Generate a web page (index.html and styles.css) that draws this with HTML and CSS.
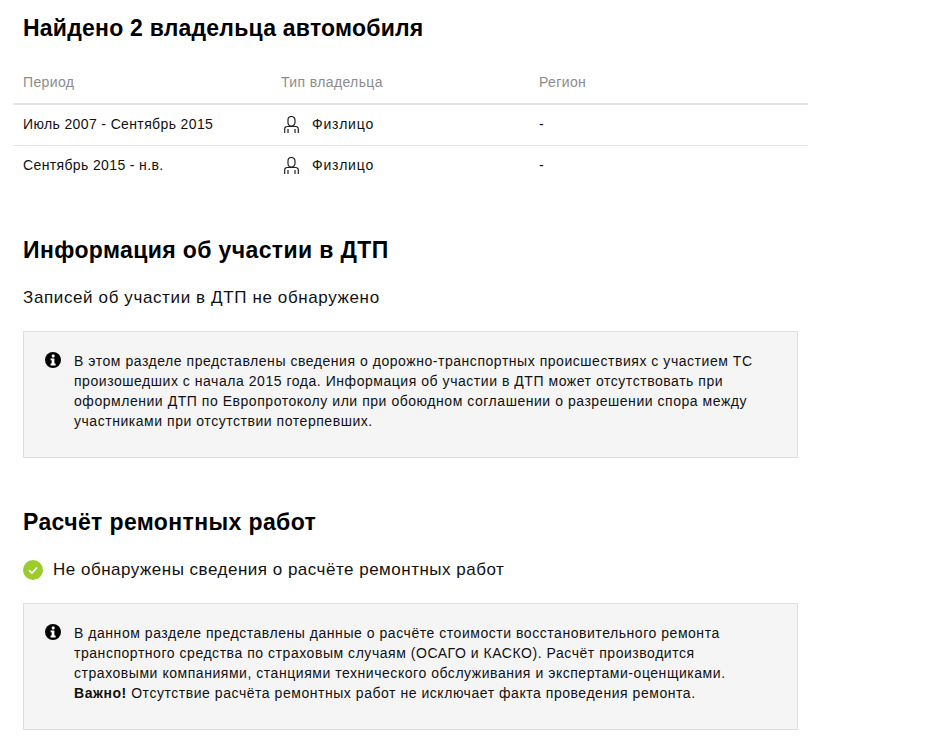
FILE: index.html
```html
<!DOCTYPE html>
<html lang="ru">
<head>
<meta charset="utf-8">
<title>Отчёт</title>
<link rel="stylesheet" href="styles.css">
</head>
<body>
<main class="page">
  <section class="owners">
    <h2 class="title title-tight">Найдено 2 владельца автомобиля</h2>
    <div class="table">
      <div class="row head"><span>Период</span><span>Тип владельца</span><span>Регион</span></div>
      <div class="row">
        <span>Июль 2007 - Сентябрь 2015</span>
        <span class="type"><svg class="person" viewBox="0 0 15 17" width="15" height="17"><path d="M4 4a3.500 3.500 0 0 1 7 0v2.500a3.500 3.500 0 0 1-7 0zM.7 17v-4a2.500 2.500 0 0 1 2.500-2.500h8.600a2.500 2.500 0 0 1 2.500 2.500v4M4 13v4M11 13v4" fill="none" stroke="#222" stroke-width="1.200"/></svg>Физлицо</span>
        <span>-</span>
      </div>
      <div class="row">
        <span>Сентябрь 2015 - н.в.</span>
        <span class="type"><svg class="person" viewBox="0 0 15 17" width="15" height="17"><path d="M4 4a3.500 3.500 0 0 1 7 0v2.500a3.500 3.500 0 0 1-7 0zM.7 17v-4a2.500 2.500 0 0 1 2.500-2.500h8.600a2.500 2.500 0 0 1 2.500 2.500v4M4 13v4M11 13v4" fill="none" stroke="#222" stroke-width="1.200"/></svg>Физлицо</span>
        <span>-</span>
      </div>
    </div>
  </section>
  <section class="dtp">
    <h2 class="title">Информация об участии в ДТП</h2>
    <p class="status">Записей об участии в ДТП не обнаружено</p>
    <div class="note">
      <svg class="info" viewBox="0 0 16 16" width="16" height="16"><circle cx="8" cy="8" r="8" fill="#000"/><rect x="6.800" y="2.600" width="2.800" height="2.800" rx="1" fill="#fff"/><path d="M5.600 6.500h3.800v5.100h1.200v1.800H5.600v-1.800h1.100V8.300H5.600z" fill="#fff"/></svg>
      <p>В этом разделе представлены сведения о дорожно-транспортных происшествиях с участием ТС произошедших с начала 2015 года. Информация об участии в ДТП может отсутствовать при оформлении ДТП по Европротоколу или при обоюдном соглашении о разрешении спора между участниками при отсутствии потерпевших.</p>
    </div>
  </section>
  <section class="repair">
    <h2 class="title">Расчёт ремонтных работ</h2>
    <p class="status ok"><svg class="check" viewBox="0 0 20 20" width="20" height="20"><circle cx="10" cy="10" r="10" fill="#9ccc2c"/><path d="M6 10.300l3 2.700 5-5.500" fill="none" stroke="#fff" stroke-width="1.800"/></svg>Не обнаружены сведения о расчёте ремонтных работ</p>
    <div class="note">
      <svg class="info" viewBox="0 0 16 16" width="16" height="16"><circle cx="8" cy="8" r="8" fill="#000"/><rect x="6.800" y="2.600" width="2.800" height="2.800" rx="1" fill="#fff"/><path d="M5.600 6.500h3.800v5.100h1.200v1.800H5.600v-1.800h1.100V8.300H5.600z" fill="#fff"/></svg>
      <p>В данном разделе представлены данные о расчёте стоимости восстановительного ремонта транспортного средства по страховым случаям (ОСАГО и КАСКО). Расчёт производится страховыми компаниями, станциями технического обслуживания и экспертами-оценщиками. <b>Важно!</b> Отсутствие расчёта ремонтных работ не исключает факта проведения ремонта.</p>
    </div>
  </section>
</main>
</body>
</html>
```
FILE: styles.css
```css
* { box-sizing: border-box; }
html, body { margin: 0; padding: 0; background: #fff; }
body { font-family: "Liberation Sans", Arial, sans-serif; color: #111; overflow: hidden; height: 746px; }
.page { width: 935px; padding: 0 0 0 23px; }
.title { margin: 0; font-size: 23px; line-height: 28px; font-weight: 700; color: #000; letter-spacing: 0.38px; }
.title-tight { letter-spacing: 0.22px; }
.owners { padding-top: 14px; }
.table { margin: 18px 0 0 -10px; width: 795px; }
.row { display: grid; grid-template-columns: 258px 258px 1fr; padding: 0 0 2px 10px; height: 41px; align-items: center; font-size: 14px; letter-spacing: 0.37px; border-bottom: 1px solid #e6e6e6; }
.row:last-child { border-bottom: 0; padding-bottom: 3px; }
.head { height: 45px; color: #8c8c8c; border-bottom: 2px solid #e2e2e2; padding-top: 1px; padding-bottom: 0; }
.type { display: flex; align-items: center; letter-spacing: 0.8px; }
.person { margin: 1px 13px 0 3px; flex: none; }
.dtp { padding-top: 49px; }
.status { margin: 22px 0 0; font-size: 17px; line-height: 24px; letter-spacing: 0.62px; color: #111; }
.note { display: flex; width: 775px; margin-top: 21px; height: 127px; padding: 19px 30px 0 21px; background: #f5f5f5; border: 1px solid #dedede; }
.note p { margin: 0; font-size: 14px; line-height: 20px; letter-spacing: 0.54px; color: #111; }
.info { flex: none; margin: 1px 13px 0 0; }
.repair { padding-top: 50px; }
.ok { display: flex; align-items: center; margin-top: 22px; letter-spacing: 0.5px; }
.check { flex: none; margin-right: 10px; }
```
